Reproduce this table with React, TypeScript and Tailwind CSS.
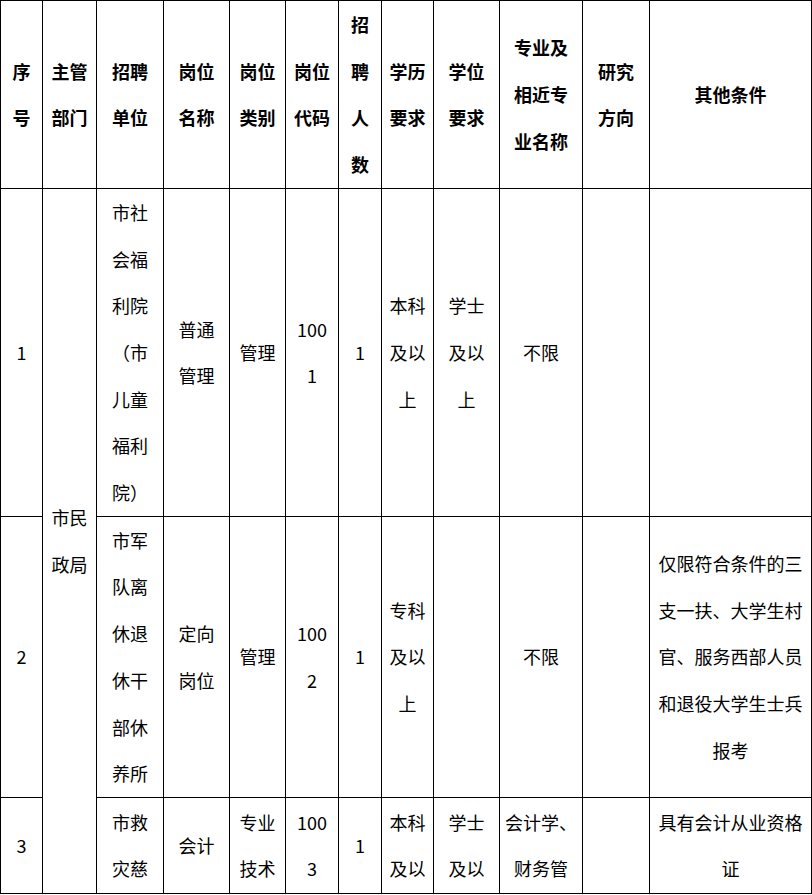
import React from 'react';

// 招聘岗位表 - screenshot recreation
type Cell = { lines: string[]; rowSpan?: number; bold?: boolean };

const widths = [
  'w-[42px]', 'w-[54px]', 'w-[67px]', 'w-[66px]', 'w-[56px]', 'w-[53px]',
  'w-[43px]', 'w-[52px]', 'w-[66px]', 'w-[83px]', 'w-[67px]', 'w-[162px]',
];

const header: string[][] = [
  ['序', '号'],
  ['主管', '部门'],
  ['招聘', '单位'],
  ['岗位', '名称'],
  ['岗位', '类别'],
  ['岗位', '代码'],
  ['招', '聘', '人', '数'],
  ['学历', '要求'],
  ['学位', '要求'],
  ['专业及', '相近专', '业名称'],
  ['研究', '方向'],
  ['其他条件'],
];

const rows: Cell[][] = [
  [
    { lines: ['1'] },
    { lines: ['市民', '政局'], rowSpan: 3 },
    { lines: ['市社', '会福', '利院', '（市', '儿童', '福利', '院）'] },
    { lines: ['普通', '管理'] },
    { lines: ['管理'] },
    { lines: ['100', '1'] },
    { lines: ['1'] },
    { lines: ['本科', '及以', '上'] },
    { lines: ['学士', '及以', '上'] },
    { lines: ['不限'] },
    { lines: [] },
    { lines: [] },
  ],
  [
    { lines: ['2'] },
    { lines: ['市军', '队离', '休退', '休干', '部休', '养所'] },
    { lines: ['定向', '岗位'] },
    { lines: ['管理'] },
    { lines: ['100', '2'] },
    { lines: ['1'] },
    { lines: ['专科', '及以', '上'] },
    { lines: [] },
    { lines: ['不限'] },
    { lines: [] },
    { lines: ['仅限符合条件的三', '支一扶、大学生村', '官、服务西部人员', '和退役大学生士兵', '报考'] },
  ],
  [
    { lines: ['3'] },
    { lines: ['市救', '灾慈'] },
    { lines: ['会计'] },
    { lines: ['专业', '技术'] },
    { lines: ['100', '3'] },
    { lines: ['1'] },
    { lines: ['本科', '及以'] },
    { lines: ['学士', '及以'] },
    { lines: ['会计学、', '财务管'] },
    { lines: [] },
    { lines: ['具有会计从业资格', '证'] },
  ],
];

const rowHeights = ['', '', 'h-[96px]'];

function Lines({ lines }: { lines: string[] }) {
  return (
    <>
      {lines.map((l, i) => (
        <div key={i} className="whitespace-nowrap [text-spacing-trim:space-all]">{l}</div>
      ))}
    </>
  );
}

export default function App() {
  return (
    <div className="w-[812px] h-[895px] bg-white overflow-hidden">
      <table
        className="table-fixed border-collapse w-[811px] text-[18px] leading-[46.7px] text-black"
        style={{ fontFamily: '"Noto Sans CJK SC", "Noto Sans", sans-serif' }}
      >
        <colgroup>
          {widths.map((w, i) => (
            <col key={i} className={w} />
          ))}
        </colgroup>
        <thead>
          <tr>
            {header.map((h, i) => (
              <th key={i} className="border border-black p-0 align-middle text-center font-bold">
                <Lines lines={h} />
              </th>
            ))}
          </tr>
        </thead>
        <tbody>
          {rows.map((row, r) => (
            <tr key={r} className={rowHeights[r]}>
              {row.map((c, i) => (
                <td
                  key={i}
                  rowSpan={c.rowSpan}
                  className="border border-black p-0 align-middle text-center"
                >
                  <Lines lines={c.lines} />
                </td>
              ))}
            </tr>
          ))}
        </tbody>
      </table>
    </div>
  );
}
